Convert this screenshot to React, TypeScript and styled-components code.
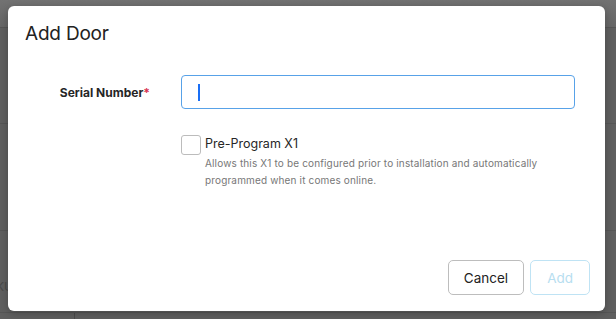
import styled, { createGlobalStyle } from "styled-components"

const Global = createGlobalStyle`
  html, body { margin: 0; padding: 0; }
  body {
    font-family: "Inter", "Liberation Sans", sans-serif;
    width: 616px;
    height: 319px;
    overflow: hidden;
  }
`

const Backdrop = styled.div`
  position: relative;
  width: 616px;
  height: 319px;
  background: #5f5f5f;
  display: flex;
  flex-direction: column;
`

const TopBar = styled.div`
  height: 27px;
  background: linear-gradient(#727272, #666666);
  border-bottom: 1px solid #555555;
`

const Section = styled.div<{ h: number }>`
  height: ${p => p.h}px;
  border-bottom: 1px solid #565656;
  display: flex;
  align-items: flex-end;
`

const Faint = styled.span`
  font-size: 12px;
  color: #4a4a4a;
  margin-left: -4px;
  padding-bottom: 18px;
`

const BottomStrip = styled.div`
  flex: 1;
  display: flex;
`

const BottomCell = styled.div`
  width: 74px;
  border-right: 1px solid #4c4c4c;
`

const Modal = styled.div`
  position: absolute;
  left: 8px;
  top: 6px;
  width: 597px;
  height: 305px;
  background: #ffffff;
  border-radius: 6px;
  display: flex;
  flex-direction: column;
  box-shadow: 0 2px 8px rgba(0, 0, 0, 0.25);
`

const Header = styled.div`
  padding: 16px 17px 0;
  height: 36px;
`

const Title = styled.h2`
  margin: 0;
  font-size: 19px;
  font-weight: 400;
  color: #222;
  letter-spacing: -0.2px;
`

const Body = styled.div`
  flex: 1;
  padding: 17px 30px 0 0;
  display: flex;
  flex-direction: column;
  gap: 26px;
`

const Row = styled.div`
  display: grid;
  grid-template-columns: 142px 1fr;
  column-gap: 31px;
  align-items: center;
`

const Label = styled.label`
  text-align: right;
  font-size: 12px;
  font-weight: 700;
  color: #262626;
`

const Req = styled.span`
  color: #d8334f;
`

const FakeInput = styled.div`
  height: 32px;
  border: 1px solid #58a2e8;
  border-radius: 4px;
  display: flex;
  align-items: center;
  padding-left: 16px;
`

const Caret = styled.span`
  width: 2px;
  height: 17px;
  background: #1a6ff5;
`

const CheckWrap = styled.div`
  grid-column: 2;
  display: flex;
  gap: 4px;
  align-items: flex-start;
`

const Box = styled.span`
  width: 18px;
  height: 18px;
  border: 1px solid #bcbcbc;
  border-radius: 3px;
  flex-shrink: 0;
`

const CheckText = styled.div`
  display: flex;
  flex-direction: column;
`

const CheckTitle = styled.span`
  font-size: 12.5px;
  color: #262626;
  line-height: 17px;
  margin-bottom: 3px;
`

const Help = styled.span`
  font-size: 10px;
  color: #777;
  line-height: 17px;
  letter-spacing: 0.15px;
`

const Footer = styled.div`
  display: flex;
  justify-content: flex-end;
  gap: 6px;
  padding: 0 15px 16px 0;
`

const Btn = styled.button<{ disabled?: boolean }>`
  height: 35px;
  padding: 0 ${p => (p.disabled ? 16 : 15)}px;
  border-radius: 5px;
  background: #fff;
  font-family: "Inter", "Liberation Sans", sans-serif;
  font-size: 13.5px;
  border: 1px solid ${p => (p.disabled ? "#bfe3f4" : "#bdbdbd")};
  color: ${p => (p.disabled ? "#b7def0" : "#222")};
`

export default function App() {
  return <>
    <Global />
    <Backdrop>
      <TopBar />
      <Section h={95} />
      <Section h={106} />
      <Section h={81}><Faint>KU</Faint></Section>
      <BottomStrip><BottomCell /></BottomStrip>

      <Modal>
        <Header>
          <Title>Add Door</Title>
        </Header>
        <Body>
          <Row>
            <Label>Serial Number<Req>*</Req></Label>
            <FakeInput><Caret /></FakeInput>
          </Row>
          <Row>
            <CheckWrap>
              <Box />
              <CheckText>
                <CheckTitle>Pre-Program X1</CheckTitle>
                <Help>Allows this X1 to be configured prior to installation and automatically programmed when it comes online.</Help>
              </CheckText>
            </CheckWrap>
          </Row>
        </Body>
        <Footer>
          <Btn>Cancel</Btn>
          <Btn disabled>Add</Btn>
        </Footer>
      </Modal>
    </Backdrop>
  </>
}
